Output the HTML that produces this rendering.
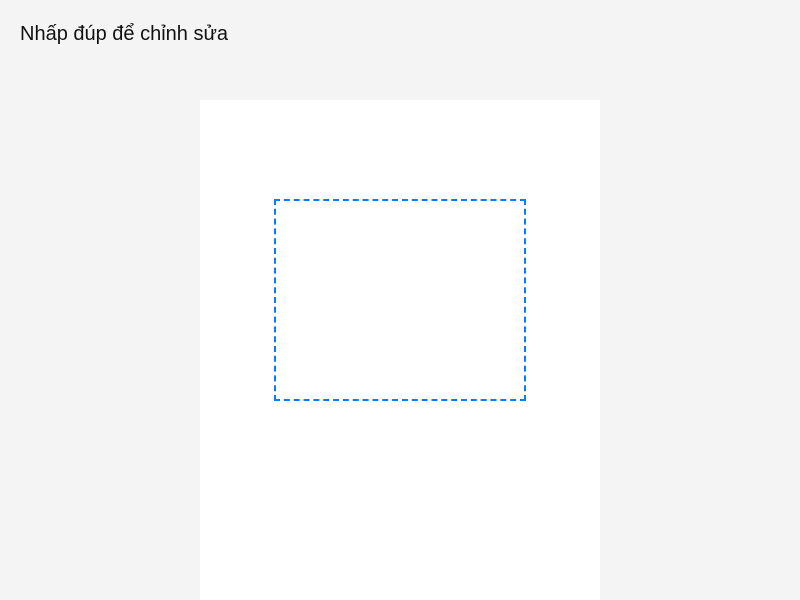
<!DOCTYPE html>
<html><head><meta charset="utf-8"><style>
html,body{margin:0;padding:0;width:800px;height:600px;overflow:hidden;background:#f4f4f4;font-family:"Liberation Sans",Arial,sans-serif;}
.t{position:absolute;left:20px;top:22px;font-size:20px;color:#111;line-height:24px;}
.p{position:absolute;left:200px;top:100px;width:400px;height:500px;background:#fff;}
.b{position:absolute;left:274px;top:199px;width:248px;height:198px;border:2px dashed #0a7bff;}
</style></head><body>
<div class="t">Nhấp đúp để chỉnh sửa</div>
<div class="p"></div>
<div class="b"></div>
</body></html>
